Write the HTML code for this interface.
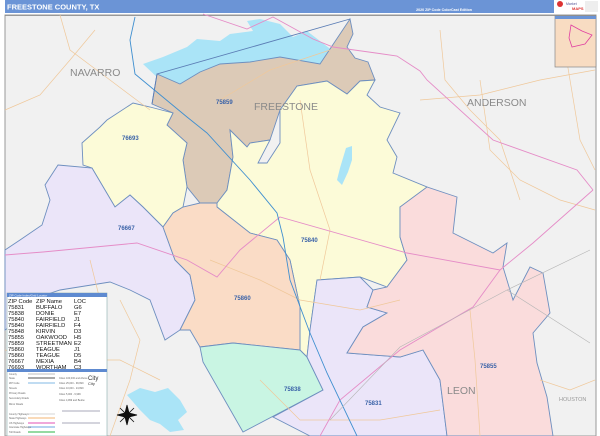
<!DOCTYPE html>
<html><head><meta charset="utf-8"><style>
html,body{margin:0;padding:0;background:#fff;width:600px;height:436px;overflow:hidden;font-family:"Liberation Sans",sans-serif}
</style></head><body>
<svg width="600" height="436" viewBox="0 0 600 436" xmlns="http://www.w3.org/2000/svg" font-family="Liberation Sans, sans-serif">
<rect x="0" y="0" width="600" height="436" fill="#fff"/>
<!-- header -->
<rect x="5" y="0" width="549" height="13" fill="#6b94d6"/>
<text x="7" y="9.5" font-size="7.5" font-weight="bold" fill="#fff">FREESTONE COUNTY, TX</text>
<text x="472" y="11" font-size="3.6" font-weight="bold" fill="#fff" text-anchor="end">2020 ZIP Code ColorCast Edition</text>
<rect x="555" y="0" width="45" height="13" fill="#fff"/>
<circle cx="560" cy="4" r="3" fill="#d33"/>
<text x="566" y="5" font-size="3.5" fill="#559">Market</text>
<text x="572" y="10" font-size="4" font-weight="bold" fill="#d33">MAPS</text>
<rect x="585" y="1" width="13" height="11" fill="#eee"/>
<!-- map -->
<rect x="5" y="15" width="591" height="421" fill="#f1f1f1" stroke="#999" stroke-width="1"/>
<g stroke="#888" stroke-width="0.8">
<line x1="5" y1="15.5" x2="596" y2="15.5"/>
</g>
<!-- lakes -->
<path d="M143,64 L163,57 L187,47 L197,39 L220,41 L230,34 L253,31 L247,21 L260,19 L280,24 L293,37 L307,31 L320,41 L333,51 L340,70 L320,71 L300,62 L280,57 L250,62 L220,64 L200,72 L180,84 L160,80 Z" fill="#aae4f7"/>
<path d="M127,395 L140,388 L155,392 L168,388 L180,400 L187,412 L178,420 L184,430 L170,432 L160,424 L150,420 L140,410 Z" fill="#aae4f7"/>
<path d="M15,262 L25,255 L38,258 L34,268 L22,272 Z" fill="#aae4f7"/>
<!-- zip regions -->
<g stroke="#6e8fbf" stroke-width="0.9">
<!-- 75859 tan -->
<path d="M350,19 L353,34 L347,47 L355,58 L368,62 L375,80 L360,81 L347,94 L327,81 L297,86 L280,110 L270,140 L250,143 L247,147 L230,130 L233,157 L227,190 L217,203 L200,203 L187,187 L183,160 L187,143 L167,125 L173,113 L152,104 L157,74 L180,84 L200,72 L220,64 L250,62 L280,57 L320,64 Z" fill="#dccab7"/>
<!-- 75840 yellow -->
<path d="M375,80 L367,95 L380,107 L400,113 L387,140 L397,157 L393,173 L427,187 L430,203 L400,207 L400,237 L407,260 L387,287 L360,277 L317,280 L310,330 L307,357 L300,350 L300,307 L290,260 L277,240 L250,233 L217,207 L217,203 L227,190 L233,157 L230,130 L247,147 L250,143 L270,140 L258,163 L267,163 L280,143 L280,110 L297,86 L327,81 L347,94 L360,81 Z" fill="#fcfbd8"/>
<!-- 76693 yellow -->
<path d="M82,143 L100,127 L107,120 L133,103 L150,107 L173,113 L167,125 L187,143 L183,160 L187,187 L183,207 L173,213 L163,227 L143,207 L130,195 L115,207 L92,168 L83,165 Z" fill="#fcfbd8"/>
<!-- 76667 lavender -->
<path d="M58,165 L92,168 L115,207 L130,195 L143,207 L163,227 L175,260 L190,275 L195,300 L180,330 L165,340 L150,300 L130,290 L110,282 L60,290 L30,300 L20,320 L5,330 L5,250 L20,240 L42,225 L50,200 L45,185 Z" fill="#ebe5f9"/>
<!-- 75860 peach -->
<path d="M163,227 L173,213 L183,207 L200,203 L217,203 L217,207 L250,233 L277,240 L290,260 L300,307 L300,350 L233,343 L200,347 L190,330 L180,330 L195,300 L190,275 L175,260 Z" fill="#fadcc6"/>
<!-- 75838 green -->
<path d="M200,347 L233,343 L300,350 L307,357 L323,390 L243,432 L203,362 Z" fill="#c9f5e3"/>
<!-- 75831 lavender -->
<path d="M317,280 L360,277 L373,290 L367,307 L387,313 L363,327 L347,353 L400,357 L423,350 L440,380 L447,436 L310,436 L273,417 L323,390 L307,357 L310,330 Z" fill="#ebe5f9"/>
<!-- 75855 pink -->
<path d="M400,207 L427,187 L457,197 L453,233 L493,253 L507,243 L503,267 L513,300 L530,267 L543,273 L550,313 L533,333 L537,363 L547,397 L553,436 L447,436 L440,380 L423,350 L400,357 L347,353 L363,327 L387,313 L367,307 L373,290 L387,287 L407,260 L400,237 Z" fill="#fadcdc"/>
</g>
<!-- yellow center lake -->
<path d="M346,148 L352,146 L352,160 L348,172 L342,185 L337,180 L340,168 Z" fill="#aae4f7"/>
<!-- county boundary -->
<path d="M350,19 L157,74 L152,104" fill="none" stroke="#5b7db5" stroke-width="0.9"/>
<!-- roads -->
<g fill="none" stroke="#f0c89a" stroke-width="0.7">
<path d="M5,110 L40,95 L70,60 L95,30"/>
<path d="M60,15 L70,50 L110,80 L150,110"/>
<path d="M90,260 L100,300 L90,350 L80,436"/>
<path d="M300,100 L310,170 L330,230 L320,280"/>
<path d="M440,30 L445,80 L470,110 L500,140 L520,200"/>
<path d="M420,100 L480,95 L540,80 L595,70"/>
<path d="M480,80 L490,150 L520,180 L560,200 L595,210"/>
<path d="M560,20 L570,80 L580,140 L595,170"/>
<path d="M210,260 L260,280 L300,300 L360,310 L400,300"/>
<path d="M260,380 L300,420 L380,420 L440,410"/>
<path d="M470,310 L475,360 L480,436"/>
<path d="M540,380 L570,390 L595,380"/>
<path d="M5,350 L60,360 L120,360 L160,380"/>
<path d="M120,300 L140,340 L130,380 L110,436"/>
<path d="M220,100 L270,70 L330,50"/>
</g>
<g fill="none" stroke="#e58cc7" stroke-width="0.9">
<path d="M203,14 L247,29 L273,17 L313,39 L333,47 L397,56 L420,71 L427,80 L493,140 L577,170 L593,190"/>
<path d="M593,190 L533,243 L500,270 L407,253 L280,217 L240,250 L217,277 L187,260 L137,243 L43,252 L5,255"/>
<path d="M500,270 L473,307 L400,350 L340,400 L320,436"/>
</g>
<path d="M135,17 L130,40 L135,74 L187,117 L207,133 L250,180 L277,213 L283,237 L290,280 L310,333 L327,373 L357,436" fill="none" stroke="#3f8fd0" stroke-width="0.9"/>
<path d="M330,420 L400,347 L507,290 L590,250 M507,290 L590,343" fill="none" stroke="#b5b5b5" stroke-width="0.6"/>
<!-- labels -->
<g fill="#8a8a8a" font-size="10.5">
<text x="70" y="76">NAVARRO</text>
<text x="254" y="110">FREESTONE</text>
<text x="467" y="106">ANDERSON</text>
<text x="447" y="394">LEON</text>
</g>
<text x="559" y="401" font-size="5.5" fill="#999">HOUSTON</text>
<g fill="#3b63a8" font-size="6" font-weight="bold">
<text x="216" y="104">75859</text>
<text x="122" y="140">76693</text>
<text x="118" y="230">76667</text>
<text x="301" y="242">75840</text>
<text x="234" y="300">75860</text>
<text x="284" y="391">75838</text>
<text x="365" y="405">75831</text>
<text x="480" y="368">75855</text>
</g>
<!-- inset -->
<rect x="555" y="16" width="41" height="51" fill="#f8dcc2" stroke="#888" stroke-width="0.7"/>
<rect x="555" y="16" width="41" height="3" fill="#6b94d6"/>
<path d="M571,25 L582,31 L592,35 L585,44 L572,47 L569,38 Z" fill="none" stroke="#e040a0" stroke-width="0.8"/>
<!-- compass -->
<g stroke="#111" stroke-width="0.8" fill="#111">
<path d="M127,405 L129,413 L137,415 L129,417 L127,425 L125,417 L117,415 L125,413 Z"/>
<line x1="120" y1="408" x2="134" y2="422"/><line x1="134" y1="408" x2="120" y2="422"/>
</g>
<!-- legend -->
<rect x="7" y="293" width="100" height="143" fill="#fff" stroke="#8aa" stroke-width="0.6"/>
<rect x="7" y="293" width="100" height="4" fill="#5e8ad0"/>
<text x="9" y="296.3" font-size="3" fill="#fff">ZIP Code Index/Grid Locator</text>
<g font-size="5.8" fill="#111">
<text x="8" y="303">ZIP Code</text><text x="36" y="303">ZIP Name</text><text x="74" y="303">LOC</text>
<text x="8" y="309">75831</text><text x="36" y="309">BUFFALO</text><text x="74" y="309">G6</text>
<text x="8" y="315">75838</text><text x="36" y="315">DONIE</text><text x="74" y="315">E7</text>
<text x="8" y="321">75840</text><text x="36" y="321">FAIRFIELD</text><text x="74" y="321">J1</text>
<text x="8" y="327">75840</text><text x="36" y="327">FAIRFIELD</text><text x="74" y="327">F4</text>
<text x="8" y="333">75848</text><text x="36" y="333">KIRVIN</text><text x="74" y="333">D3</text>
<text x="8" y="339">75855</text><text x="36" y="339">OAKWOOD</text><text x="74" y="339">H5</text>
<text x="8" y="345">75859</text><text x="36" y="345">STREETMAN</text><text x="74" y="345">E2</text>
<text x="8" y="351">75860</text><text x="36" y="351">TEAGUE</text><text x="74" y="351">J1</text>
<text x="8" y="357">75860</text><text x="36" y="357">TEAGUE</text><text x="74" y="357">D5</text>
<text x="8" y="363">76667</text><text x="36" y="363">MEXIA</text><text x="74" y="363">B4</text>
<text x="8" y="369">76693</text><text x="36" y="369">WORTHAM</text><text x="74" y="369">C3</text>
</g>
<rect x="7" y="369" width="100" height="3" fill="#5e8ad0"/>
<g stroke-width="1.2" fill="none">
<line x1="28" y1="374" x2="55" y2="374" stroke="#ccc"/>
<line x1="28" y1="378" x2="55" y2="378" stroke="#777"/>
<line x1="28" y1="383" x2="55" y2="383" stroke="#9bc6ea"/>
<line x1="28" y1="414" x2="55" y2="414" stroke="#ddd"/>
<line x1="28" y1="418" x2="55" y2="418" stroke="#f5c48f"/>
<line x1="28" y1="423" x2="55" y2="423" stroke="#e774c4"/>
<line x1="28" y1="427" x2="55" y2="427" stroke="#8ab6e8"/>
<line x1="28" y1="432" x2="55" y2="432" stroke="#55c36a"/>
</g>
<g font-size="2.5" fill="#666">
<text x="9" y="375">County</text><text x="9" y="379">State</text><text x="9" y="384">ZIP Code</text>
<text x="9" y="389">Streets</text><text x="9" y="394">Primary Roads</text><text x="9" y="399">Secondary Roads</text>
<text x="9" y="405">Minor Roads</text><text x="9" y="415">County Highways</text><text x="9" y="419">State Highways</text>
<text x="9" y="424">US Highways</text><text x="9" y="428">Interstate Highways</text><text x="9" y="433">Toll Roads</text>
<text x="59" y="379">Cities 100,000 and Above</text><text x="59" y="384">Cities 25,000 - 99,999</text>
<text x="59" y="389">Cities 10,000 - 24,999</text><text x="59" y="395">Cities 5,000 - 9,999</text><text x="59" y="401">Cities 4,999 and Below</text>
</g>
<text x="88" y="380" font-size="6" fill="#333">City</text>
<text x="88" y="385" font-size="4" fill="#333">City</text>
<line x1="62" y1="411" x2="100" y2="411" stroke="#557" stroke-width="0.5"/>
<line x1="62" y1="423" x2="100" y2="423" stroke="#557" stroke-width="0.5"/>
</svg>
</body></html>
